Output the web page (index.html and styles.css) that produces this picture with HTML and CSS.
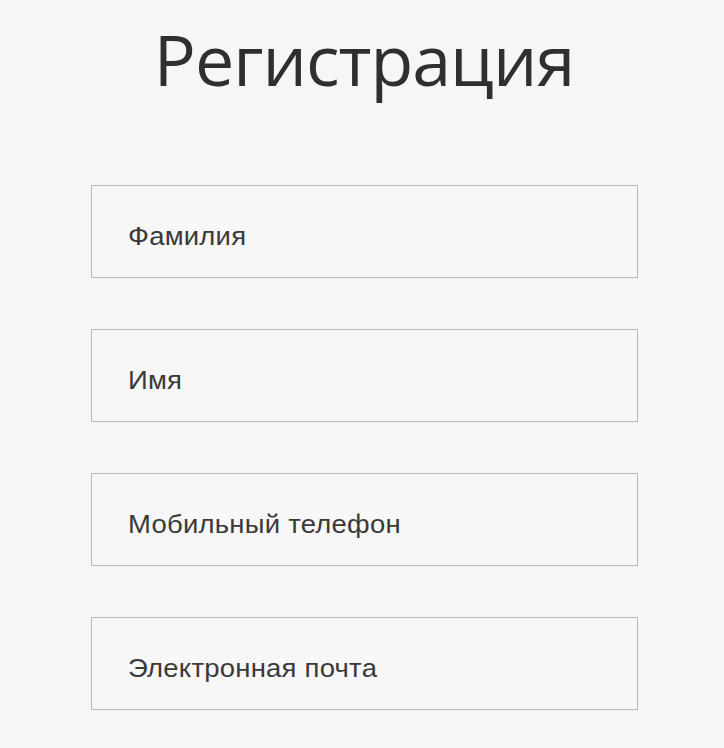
FILE: index.html
```html
<!DOCTYPE html>
<html lang="ru">
<head>
<meta charset="utf-8">
<link rel="stylesheet" href="styles.css">
</head>
<body>
<div class="page">
  <h1 class="title">Регистрация</h1>
  <form class="form">
    <div class="field"><span class="placeholder">Фамилия</span></div>
    <div class="field"><span class="placeholder">Имя</span></div>
    <div class="field"><span class="placeholder">Мобильный телефон</span></div>
    <div class="field"><span class="placeholder">Электронная почта</span></div>
  </form>
</div>
</body>
</html>
```
FILE: styles.css
```css
html, body {
  margin: 0;
  padding: 0;
  background: #f7f6f6;
}
.page {
  width: 724px;
  height: 748px;
  display: flex;
  flex-direction: column;
  align-items: center;
  overflow: hidden;
}
.title {
  margin: 17px 0 0 4px;
  font-family: "Open Sans", sans-serif;
  font-weight: 400;
  font-size: 70px;
  line-height: 84px;
  color: #2f2f2f;
  letter-spacing: -1px;
}
.form {
  margin: 84px 0 0 4px;
  display: flex;
  flex-direction: column;
  gap: 51px;
}
.field {
  box-sizing: border-box;
  width: 547px;
  height: 93px;
  border: 1px solid #b9b9b9;
  background: #f8f7f7;
  display: flex;
  align-items: center;
  padding: 10px 0 0 36px;
}
.placeholder {
  font-family: "Liberation Sans", Arial, sans-serif;
  font-size: 25px;
  letter-spacing: 0.2px;
  color: #3a3a3a;
  transform: scaleX(1.1);
  transform-origin: left center;
}
```
